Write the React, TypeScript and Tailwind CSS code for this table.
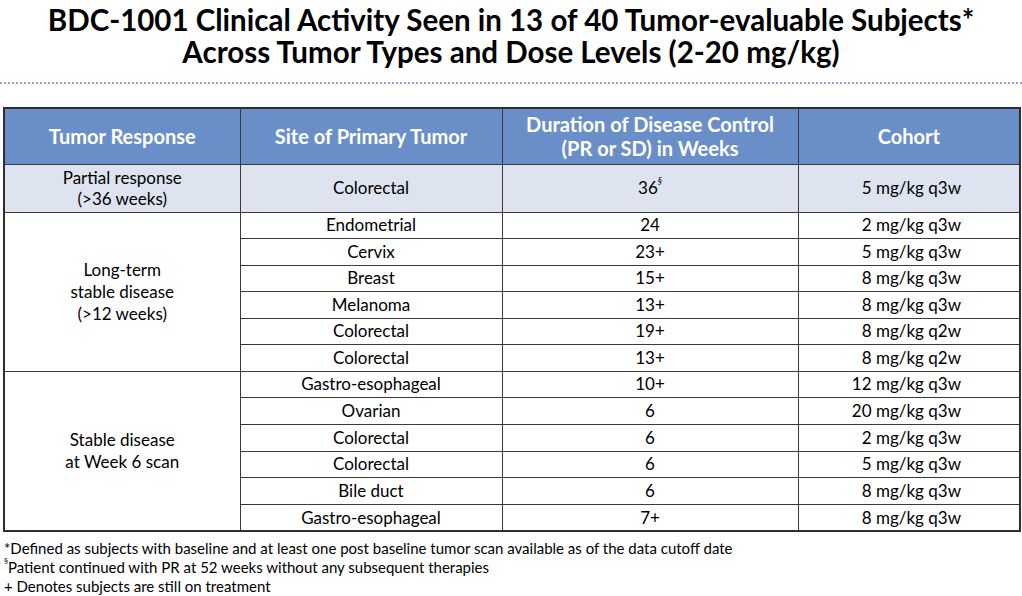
import React from "react";

const font = { fontFamily: "Lato, 'Open Sans', sans-serif" };

type Row = { site: string; dur: React.ReactNode; cohort: string };

const longTerm: Row[] = [
  { site: "Endometrial", dur: "24", cohort: "2 mg/kg q3w" },
  { site: "Cervix", dur: "23+", cohort: "5 mg/kg q3w" },
  { site: "Breast", dur: "15+", cohort: "8 mg/kg q3w" },
  { site: "Melanoma", dur: "13+", cohort: "8 mg/kg q3w" },
  { site: "Colorectal", dur: "19+", cohort: "8 mg/kg q2w" },
  { site: "Colorectal", dur: "13+", cohort: "8 mg/kg q2w" },
];

const stable: Row[] = [
  { site: "Gastro-esophageal", dur: "10+", cohort: "12 mg/kg q3w" },
  { site: "Ovarian", dur: "6", cohort: "20 mg/kg q3w" },
  { site: "Colorectal", dur: "6", cohort: "2 mg/kg q3w" },
  { site: "Colorectal", dur: "6", cohort: "5 mg/kg q3w" },
  { site: "Bile duct", dur: "6", cohort: "8 mg/kg q3w" },
  { site: "Gastro-esophageal", dur: "7+", cohort: "8 mg/kg q3w" },
];

const cell = "border border-[#3a3a3a] text-center p-0";

const Group = ({ label, rows, h }: { label: React.ReactNode; rows: Row[]; h: string }) => (
  <>
    {rows.map((r, i) => (
      <tr key={i} className={h}>
        {i === 0 && (
          <td rowSpan={rows.length} className={`${cell} leading-[22px]`}>
            {label}
          </td>
        )}
        <td className={cell}>{r.site}</td>
        <td className={cell}>{r.dur}</td>
        <td className={`${cell} text-right pr-[58px]`}>{r.cohort}</td>
      </tr>
    ))}
  </>
);

export default function App() {
  return (
    <div className="w-[1022px] h-[596px] bg-white text-black overflow-hidden relative" style={font}>
      <h1 className="pt-[4px] text-center font-bold text-[29.5px] leading-[32px] text-black">
        BDC-1001 Clinical Activity Seen in 13 of 40 Tumor-evaluable Subjects*
        <br />
        Across Tumor Types and Dose Levels (2-20 mg/kg)
      </h1>
      <div className="mt-[14px] mx-0 border-t-[2px] border-dotted border-[#8fa6c8]" />

      <div className="pl-[3px] pt-[23px]">
        <table className="w-[1016px] border-collapse border-[2px] border-[#2e2e2e] text-[17px] leading-[22px] text-black table-fixed">
          <colgroup>
            <col className="w-[236px]" />
            <col className="w-[262px]" />
            <col className="w-[296px]" />
            <col className="w-[222px]" />
          </colgroup>
          <thead>
            <tr className="h-[56px] bg-[#6a8fc8] text-white font-bold text-[20px] leading-[24px]">
              <th className={cell}>Tumor Response</th>
              <th className={cell}>Site of Primary Tumor</th>
              <th className={cell}>
                Duration of Disease Control
                <br />
                (PR or SD) in Weeks
              </th>
              <th className={cell}>Cohort</th>
            </tr>
          </thead>
          <tbody>
            <tr className="h-[48px] bg-[#dde3ef]">
              <td className={`${cell} leading-[21px]`}>
                Partial response
                <br />
                (&gt;36 weeks)
              </td>
              <td className={cell}>Colorectal</td>
              <td className={cell}>
                36<sup className="text-[9px] italic align-[6px]">§</sup>
              </td>
              <td className={`${cell} text-right pr-[58px]`}>5 mg/kg q3w</td>
            </tr>
            <Group
              h="h-[26.5px]"
              rows={longTerm}
              label={
                <>
                  Long-term
                  <br />
                  stable disease
                  <br />
                  (&gt;12 weeks)
                </>
              }
            />
            <Group
              h="h-[26.7px]"
              rows={stable}
              label={
                <>
                  Stable disease
                  <br />
                  at Week 6 scan
                </>
              }
            />
          </tbody>
        </table>
      </div>

      <div className="pl-[4px] pt-[7px] text-[15px] leading-[19px]">
        <p>*Defined as subjects with baseline and at least one post baseline tumor scan available as of the data cutoff date</p>
        <p>
          <sup className="text-[8px] align-[5px]">§</sup>Patient continued with PR at 52 weeks without any subsequent therapies
        </p>
        <p>+ Denotes subjects are still on treatment</p>
      </div>
    </div>
  );
}
